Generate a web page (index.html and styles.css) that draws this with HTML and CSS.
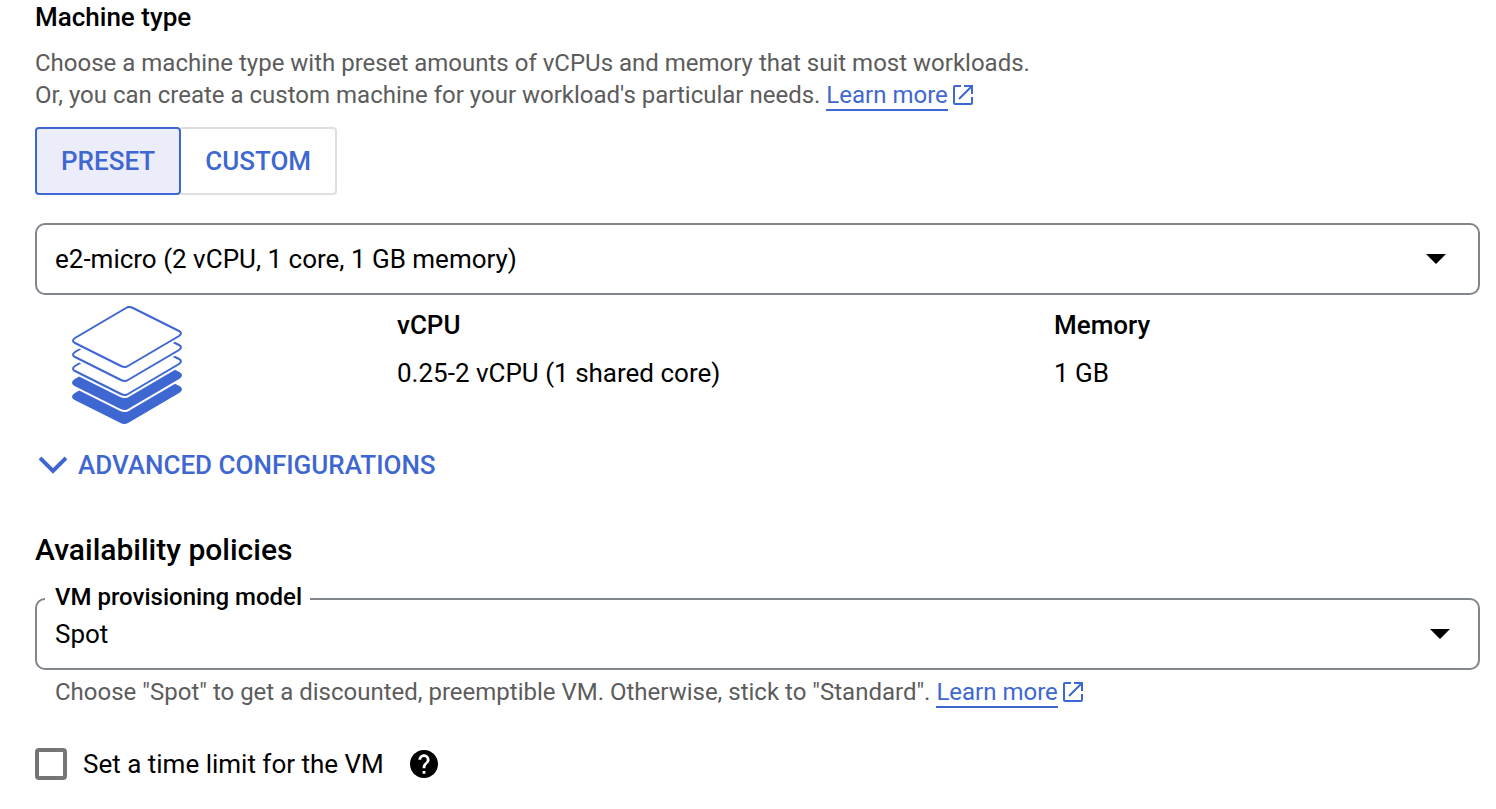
FILE: index.html
```html
<!DOCTYPE html>
<html lang="en">
<head>
<meta charset="utf-8">
<title>Machine type</title>
<link rel="stylesheet" href="styles.css">
</head>
<body>
<svg class="defs" width="0" height="0" aria-hidden="true">
  <symbol id="open" viewBox="0 0 22 22">
    <path d="M9 2H3Q2 2 2 3V19Q2 20 3 20H19Q20 20 20 19V13M12 2H20V10M20 2L7 15" fill="none" stroke="currentColor" stroke-width="2"/>
  </symbol>
  <symbol id="arrow" viewBox="0 0 20 10"><path d="M0 0H20L10 10Z" fill="currentColor"/></symbol>
  <path id="sheet" d="M76 13Q79 11 83 13L129 36Q133 38 129 41L78 71Q75 73 71 71L25 48Q21 46 25 43Z"/>
</svg>
<main class="page">
  <section>
    <h2 class="title">Machine type</h2>
    <p class="hint">Choose a machine type with preset amounts of vCPUs and memory that suit most workloads.<br>Or, you can create a custom machine for your workload's particular needs. <a class="link" href="#"><span class="link-text">Learn more</span><svg class="open-icon" aria-hidden="true"><use href="#open"/></svg></a></p>
    <div class="toggle">
      <button class="toggle-btn selected" type="button" aria-pressed="true">PRESET</button>
      <button class="toggle-btn" type="button" aria-pressed="false">CUSTOM</button>
    </div>
    <div class="select-box">
      <select class="select" aria-label="Machine type"><option>e2-micro (2 vCPU, 1 core, 1 GB memory)</option></select>
      <svg class="arrow" aria-hidden="true"><use href="#arrow"/></svg>
    </div>
    <div class="specs">
      <svg class="stack" viewBox="21 11 112 118" aria-hidden="true">
        <g class="sheet-full"><use class="halo" href="#sheet" y="56"/><use class="face" href="#sheet" y="56"/></g>
        <g class="sheet-full"><use class="halo" href="#sheet" y="42"/><use class="face" href="#sheet" y="42"/></g>
        <g class="sheet-open"><use class="halo" href="#sheet" y="28"/><use class="face" href="#sheet" y="28"/></g>
        <g class="sheet-open"><use class="halo" href="#sheet" y="14"/><use class="face" href="#sheet" y="14"/></g>
        <g class="sheet-open"><use class="halo" href="#sheet"/><use class="face" href="#sheet"/></g>
      </svg>
      <dl class="spec"><dt>vCPU</dt><dd>0.25-2 vCPU (1 shared core)</dd></dl>
      <dl class="spec"><dt>Memory</dt><dd>1 GB</dd></dl>
    </div>
    <button class="expander" type="button"><svg class="chevron" viewBox="0 0 28 18" aria-hidden="true"><path d="M1 2L14 15L27 2" fill="none" stroke="currentColor" stroke-width="4"/></svg>ADVANCED CONFIGURATIONS</button>
  </section>
  <section class="policies">
    <h2 class="title large">Availability policies</h2>
    <fieldset class="field">
      <legend class="legend"><label for="model">VM provisioning model</label></legend>
      <select class="select" id="model"><option>Spot</option></select>
      <svg class="arrow" aria-hidden="true"><use href="#arrow"/></svg>
    </fieldset>
    <p class="hint inset">Choose "Spot" to get a discounted, preemptible VM. Otherwise, stick to "Standard". <a class="link" href="#"><span class="link-text">Learn more</span><svg class="open-icon" aria-hidden="true"><use href="#open"/></svg></a></p>
    <div class="limit">
      <input class="check" type="checkbox" id="limit"><label for="limit">Set a time limit for the VM</label>
      <button class="help" type="button" aria-label="Help"><svg class="help-icon" viewBox="2 2 20 20" aria-hidden="true"><path fill="currentColor" d="M12 2C6.48 2 2 6.48 2 12s4.48 10 10 10 10-4.48 10-10S17.52 2 12 2zm1 17h-2v-2h2v2zm2.07-7.75l-.9.92C13.45 12.9 13 13.5 13 15h-2v-.5c0-1.1.45-2.1 1.17-2.83l1.24-1.26c.37-.36.59-.86.59-1.41 0-1.1-.9-2-2-2s-2 .9-2 2H8c0-2.21 1.79-4 4-4s4 1.79 4 4c0 .88-.36 1.68-.93 2.25z"/></svg></button>
    </div>
  </section>
</main>
</body>
</html>
```
FILE: styles.css
```css
* { box-sizing: border-box; }
body { margin: 0; background: #fff; color: #000; font: 26px/32px Roboto, sans-serif; }
.defs { position: absolute; }
.page { padding: 0 16px 24px 35px; }
.title { margin: 0; font-size: 26px; line-height: 32px; font-weight: 500; padding-top: 1px; }
.large { font-size: 30px; }
.hint { margin: 14px 0 0; font-size: 24px; line-height: 32px; color: #5c5c5c; }
.inset { margin: 6px 0 0 20px; }
.link { color: #3f67d2; text-decoration: none; white-space: nowrap; }
.link-text { border-bottom: 2px solid; }
.open-icon { width: 22px; height: 22px; margin-left: 4px; vertical-align: -3px; }
.toggle { display: flex; margin-top: 16px; }
.toggle-btn { height: 68px; padding: 0 24px; background: #fff; border: 2px solid #dfdfdf; border-left: 0; border-radius: 0 4px 4px 0; font: 500 26px/32px Roboto, sans-serif; color: #3f67d2; }
.toggle-btn.selected { background: #ebedfa; border: 2px solid #3f67d2; border-radius: 4px; }
.select-box, .field { display: grid; align-items: center; border: 2px solid #80868b; border-radius: 10px; }
.select-box { height: 72px; margin-top: 28px; }
.select { grid-area: 1 / 1; width: 100%; height: 38px; padding: 0 60px 0 18px; border: 0; appearance: none; background: transparent; color: #000; font: 26px/32px Roboto, sans-serif; }
.arrow { grid-area: 1 / 1; justify-self: end; width: 20px; height: 10px; margin-right: 32px; pointer-events: none; }
.specs { display: grid; grid-template-columns: 362px 657fr 426fr; margin-top: 10px; }
.stack { width: 112px; height: 118px; margin: 1px 0 0 36px; }
.halo { fill: #fff; stroke: #fff; stroke-width: 6; }
.face { stroke: #3f67d2; stroke-width: 2; }
.sheet-open .face { fill: #fff; }
.sheet-full .face { fill: #3f67d2; }
.spec { margin: 4px 0 0; }
.spec dt { font-weight: 500; font-size: 26px; }
.spec dd { margin: 16px 0 0; }
.expander { display: flex; align-items: center; gap: 11px; margin-top: 25px; padding: 0 4px; border: 0; background: none; color: #3f67d2; font: 500 26px/32px Roboto, sans-serif; }
.chevron { width: 28px; height: 18px; }
.policies { margin-top: 52px; }
.field { margin: 17px 0 0; padding: 0 0 15px; min-width: 0; }
.legend { margin-left: 8px; padding: 0 8px 4px 10px; font-size: 24px; line-height: 28px; font-weight: 500; }
.field .arrow { margin-right: 28px; }
.limit { display: flex; align-items: center; margin-top: 40px; }
.check { appearance: none; width: 32px; height: 32px; margin: 0 16px 0 0; border: 4px solid #757575; border-radius: 4px; background: #fff; }
.help { display: flex; margin-left: 26px; padding: 0; border: 0; background: none; color: #000; }
.help-icon { width: 28px; height: 28px; }
```
